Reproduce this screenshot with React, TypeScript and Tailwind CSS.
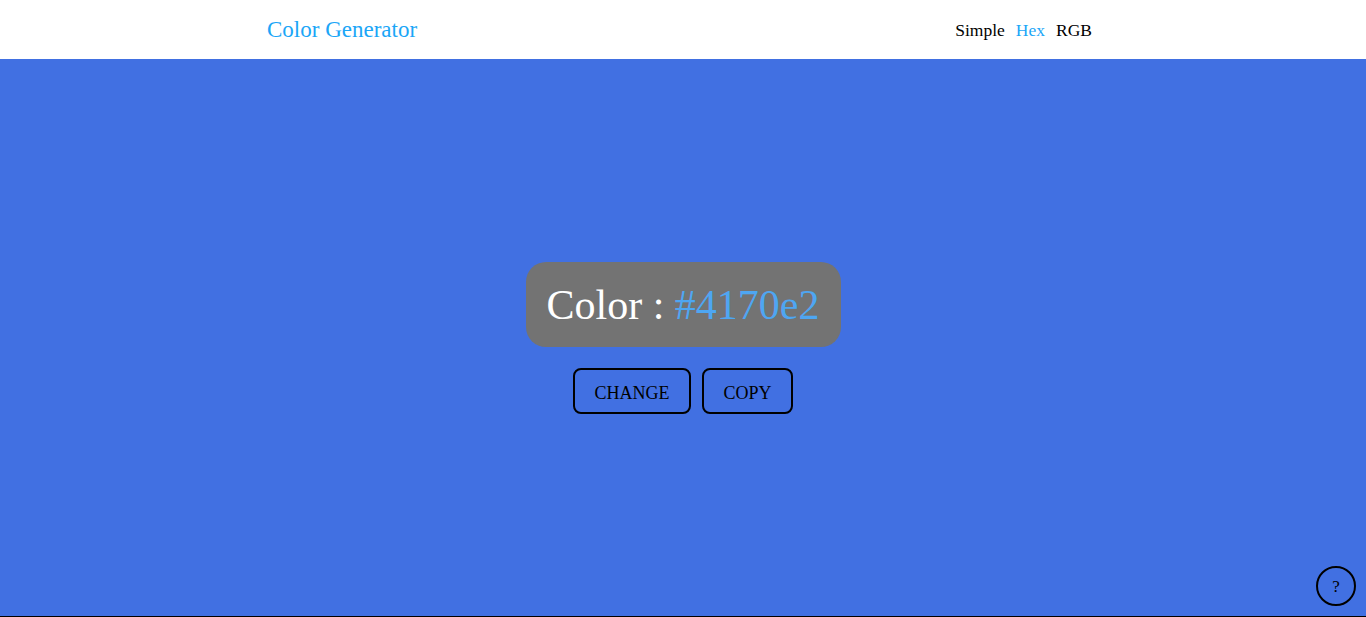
import { useState } from 'react';

const serif = { fontFamily: '"Liberation Serif", "DejaVu Serif", serif' };

export default function App() {
  const [mode, setMode] = useState('Hex');
  const color = '#4170e2';

  return (
    <div className="w-full h-[617px] flex flex-col" style={serif}>
      <header className="h-[59px] bg-white flex items-center justify-between pl-[267px] pr-[274px]">
        <span className="text-[23px] text-[#1ba6f7] pt-px">Color Generator</span>
        <nav className="flex gap-[11px] text-[17.5px] pt-[2px]">
          {['Simple', 'Hex', 'RGB'].map((m) => (
            <button
              key={m}
              onClick={() => setMode(m)}
              className={mode === m ? 'text-[#1ba6f7]' : 'text-black'}
            >
              {m}
            </button>
          ))}
        </nav>
      </header>

      <main className="relative flex-1 bg-[#4170e2] border-b border-black flex flex-col items-center justify-center">
        <div className="h-[85px] w-[315px] rounded-[20px] bg-[#737373] flex items-center justify-center">
          <span className="text-[42px] text-white leading-none pt-[2px]">
            Color : <span className="text-[#4ea6f2]">{color}</span>
          </span>
        </div>
        <div className="flex gap-[11px] mt-[21px]">
          <button className="h-[46px] w-[118px] rounded-lg border-2 border-black text-[18px] text-black pt-[6px]">
            CHANGE
          </button>
          <button className="h-[46px] w-[91px] rounded-lg border-2 border-black text-[18px] text-black pt-[6px]">
            COPY
          </button>
        </div>
        <button className="absolute right-[10px] bottom-[10px] w-10 h-10 rounded-full border-2 border-black text-[17px] text-black flex items-center justify-center pt-[2px]">
          ?
        </button>
      </main>
    </div>
  );
}
